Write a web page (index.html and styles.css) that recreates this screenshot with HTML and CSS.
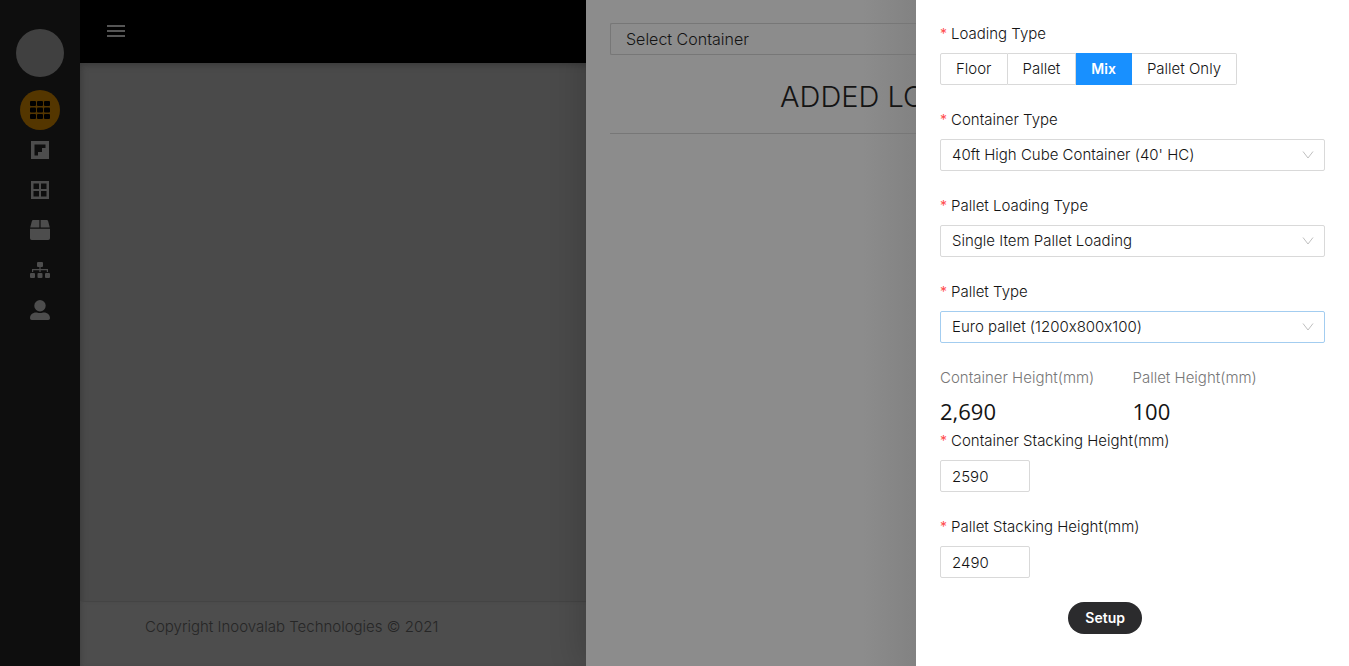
FILE: index.html
```html
<!DOCTYPE html>
<html lang="en">

<head>
    <meta charset="UTF-8">
    <meta name="viewport" content="width=device-width, initial-scale=1.0">
    <title>Inoovalab</title>
    <link rel="stylesheet" href="styles.css">
</head>

<body>
    <div class="app">
        <nav class="sidebar">
            <div class="avatar"></div>
            <a href="#" class="nav-item active" aria-label="Containers">
                <svg width="20" height="18" viewBox="0 0 20 18">
                    <rect x="0" y="0" width="6" height="5" rx="1"/><rect x="7" y="0" width="6" height="5" rx="1"/><rect x="14" y="0" width="6" height="5" rx="1"/>
                    <rect x="0" y="6.5" width="6" height="5" rx="1"/><rect x="7" y="6.5" width="6" height="5" rx="1"/><rect x="14" y="6.5" width="6" height="5" rx="1"/>
                    <rect x="0" y="13" width="6" height="5" rx="1"/><rect x="7" y="13" width="6" height="5" rx="1"/><rect x="14" y="13" width="6" height="5" rx="1"/>
                </svg>
            </a>
            <a href="#" class="nav-item" aria-label="Floor">
                <svg width="18" height="18" viewBox="0 0 18 18">
                    <path fill-rule="evenodd" d="M0 0h18v18H0zM3.500 3.500v11H7V11h4V7h3.500V3.500z"/>
                </svg>
            </a>
            <a href="#" class="nav-item" aria-label="Pallets">
                <svg width="18" height="18" viewBox="0 0 18 18">
                    <path fill-rule="evenodd" d="M0 0h18v18H0zM2.500 2.500v5.500h5.500v-5.500zM10 2.500v5.500h5.500v-5.500zM2.500 10v5.500h5.500v-5.500zM10 10v5.500h5.500v-5.500z"/>
                </svg>
            </a>
            <a href="#" class="nav-item" aria-label="Items">
                <svg width="20" height="20" viewBox="0 0 20 20">
                    <path d="M3.200 0H9.400V7.500H.200L1.900 1Q2.200 0 3.200 0zM10.600 0h6.200q1 0 1.300 1l1.700 6.500h-9.200zM0 8.700h20V18.200q0 1.800-1.800 1.800H1.800Q0 20 0 18.200z"/>
                </svg>
            </a>
            <a href="#" class="nav-item" aria-label="Groups">
                <svg width="20" height="16" viewBox="0 0 20 16">
                    <rect x="7" y="0" width="6" height="5" rx="1"/>
                    <path d="M9.400 5h1.200v2h7.400v3h-1.200V8.200h-6.200V10h-1.200V8.200H3.200V10H2V7h7.400z"/>
                    <rect x="0" y="11" width="5" height="5" rx="1"/><rect x="7.500" y="11" width="5" height="5" rx="1"/><rect x="15" y="11" width="5" height="5" rx="1"/>
                </svg>
            </a>
            <a href="#" class="nav-item" aria-label="Account">
                <svg width="20" height="20" viewBox="0 0 20 20">
                    <circle cx="10" cy="5.700" r="5.700"/>
                    <path d="M0 18.200C0 14.800 2.600 12.500 6 12.500c1.400 0 2 .600 4 .600s2.600-.600 4-.600c3.400 0 6 2.300 6 5.700q0 1.800-1.800 1.800H1.800Q0 20 0 18.200z"/>
                </svg>
            </a>
        </nav>

        <div class="main">
            <header class="topbar">
                <button class="menu-btn" aria-label="Menu">
                    <svg width="18" height="12" viewBox="0 0 18 12"><path d="M0 0h18v2H0zM0 5h18v2H0zM0 10h18v2H0z"/></svg>
                </button>
            </header>
            <main class="content"></main>
            <footer class="footer">Copyright Inoovalab Technologies © 2021</footer>
        </div>

        <section class="loads">
            <button class="select-container">Select Container</button>
            <h1>ADDED LO</h1>
        </section>

        <form class="drawer">
            <fieldset class="field">
                <legend class="label">Loading Type</legend>
                <div class="radio-group">
                    <label><input type="radio" name="loading" value="floor"><span>Floor</span></label>
                    <label><input type="radio" name="loading" value="pallet"><span>Pallet</span></label>
                    <label><input type="radio" name="loading" value="mix" checked><span>Mix</span></label>
                    <label><input type="radio" name="loading" value="pallet-only"><span>Pallet Only</span></label>
                </div>
            </fieldset>

            <div class="field">
                <label class="label" for="container-type">Container Type</label>
                <div class="select">
                    <select id="container-type">
                        <option>40ft High Cube Container (40' HC)</option>
                    </select>
                    <svg width="12" height="8" viewBox="0 0 12 8"><path d="M1 .500l5 6.500 5-6.500"/></svg>
                </div>
            </div>

            <div class="field">
                <label class="label" for="pallet-loading">Pallet Loading Type</label>
                <div class="select">
                    <select id="pallet-loading">
                        <option>Single Item Pallet Loading</option>
                    </select>
                    <svg width="12" height="8" viewBox="0 0 12 8"><path d="M1 .500l5 6.500 5-6.500"/></svg>
                </div>
            </div>

            <div class="field">
                <label class="label" for="pallet-type">Pallet Type</label>
                <div class="select focused">
                    <select id="pallet-type">
                        <option>Euro pallet (1200x800x100)</option>
                    </select>
                    <svg width="12" height="8" viewBox="0 0 12 8"><path d="M1 .500l5 6.500 5-6.500"/></svg>
                </div>
            </div>

            <div class="stats">
                <div>
                    <div class="stat-title">Container Height(mm)</div>
                    <div class="stat-value">2,690</div>
                </div>
                <div>
                    <div class="stat-title">Pallet Height(mm)</div>
                    <div class="stat-value">100</div>
                </div>
            </div>

            <div class="field">
                <label class="label" for="container-stack">Container Stacking Height(mm)</label>
                <input class="number" id="container-stack" type="text" value="2590">
            </div>

            <div class="field">
                <label class="label" for="pallet-stack">Pallet Stacking Height(mm)</label>
                <input class="number" id="pallet-stack" type="text" value="2490">
            </div>

            <div class="actions">
                <button type="button" class="setup">Setup</button>
            </div>
        </form>
    </div>
</body>

</html>
```
FILE: styles.css
```css
* {
    box-sizing: border-box;
}

body {
    margin: 0;
    font-family: Inter, "Open Sans", sans-serif;
    font-size: 15px;
    font-weight: 300;
    font-variant-ligatures: no-contextual;
    line-height: 22px;
    color: #141414;
}

button, input, select {
    font: inherit;
    font-variant-ligatures: inherit;
    color: inherit;
}

.app {
    display: flex;
    min-height: 100vh;
}

/* sidebar */
.sidebar {
    flex: 0 0 80px;
    display: flex;
    flex-direction: column;
    align-items: center;
    padding-top: 29px;
    background: #0e0e0e;
}

.avatar {
    width: 48px;
    height: 48px;
    margin-bottom: 13px;
    border-radius: 50%;
    background: #404040;
}

.nav-item {
    display: flex;
    align-items: center;
    justify-content: center;
    width: 40px;
    height: 40px;
    border-radius: 50%;
    fill: #4d4d4d;
}

.nav-item.active {
    background: #543600;
    fill: #000;
}

/* page behind the drawers */
.main {
    flex: 1;
    display: flex;
    flex-direction: column;
    min-width: 0;
    background: #4a4a4a;
}

.topbar {
    display: flex;
    align-items: center;
    height: 63px;
    padding: 0 0 2px 27px;
    background: #000;
}

.menu-btn {
    display: flex;
    padding: 0;
    border: 0;
    background: none;
    fill: #555;
}

.content {
    flex: 1;
    box-shadow: inset 4px 5px 6px -3px #393939;
}

.footer {
    height: 65px;
    padding: 14px 65px;
    border-top: 1px solid #444;
    background: #4d4d4d;
    box-shadow: inset 4px 0 5px -3px #404040;
    color: #262626;
    white-space: nowrap;
}

/* first drawer */
.loads {
    flex: 0 0 330px;
    padding: 23px 0 0 24px;
    overflow: hidden;
    background: linear-gradient(to right, #8c8c8c 84%, #828282);
    box-shadow: -6px 0 30px rgba(0, 0, 0, 0.16);
    color: #141414;
}

.select-container {
    display: block;
    width: 100%;
    height: 32px;
    padding: 0 15px;
    border: 1px solid #777;
    border-right: 0;
    border-radius: 2px 0 0 2px;
    background: none;
    font-size: 16px;
    text-align: left;
}

.loads h1 {
    margin: 0;
    padding: 22px 0 16px 170px;
    border-bottom: 1px solid #777;
    font-size: 29px;
    font-weight: 300;
    line-height: 40px;
    white-space: nowrap;
}

/* setup drawer */
.drawer {
    flex: 0 0 433px;
    padding: 23px 24px;
    background: #fff;
}

.field {
    min-width: 0;
    margin: 0 0 24px;
    padding: 0;
    border: 0;
}

.label {
    display: block;
    padding: 0 0 8px;
}

.label::before {
    content: "*";
    display: inline-block;
    width: 11px;
    color: #ff4d4f;
    font-size: 14px;
    font-weight: 400;
}

.radio-group {
    display: flex;
}

.radio-group input {
    position: absolute;
    opacity: 0;
}

.radio-group span {
    display: block;
    height: 32px;
    padding: 4px 15px;
    border: 1px solid #d9d9d9;
    border-left: 0;
}

.radio-group label:first-child span {
    border-left: 1px solid #d9d9d9;
    border-radius: 2px 0 0 2px;
}

.radio-group label:last-child span {
    border-radius: 0 2px 2px 0;
}

.radio-group input:checked + span {
    border-color: #1890ff;
    background: #1890ff;
    color: #fff;
    font-size: 14px;
    font-weight: 600;
}

.select {
    display: grid;
    align-items: center;
}

.select select,
.select svg {
    grid-area: 1 / 1;
}

.select select {
    width: 100%;
    height: 32px;
    padding: 0 30px 0 11px;
    border: 1px solid #d9d9d9;
    border-radius: 2px;
    background: #fff;
    appearance: none;
}

.select svg {
    justify-self: end;
    margin-right: 11px;
    fill: none;
    stroke: #bfbfbf;
    pointer-events: none;
}

.select.focused select {
    border-color: #a3cdf0;
}

.stats {
    display: grid;
    grid-template-columns: 1fr 1fr;
}

.stat-title {
    margin-bottom: 4px;
    color: #777;
}

.stat-value {
    font-family: "Open Sans", sans-serif;
    font-size: 22px;
    font-weight: 400;
    line-height: 37px;
}

.number {
    display: block;
    width: 90px;
    height: 32px;
    padding: 4px 11px;
    border: 1px solid #d9d9d9;
    border-radius: 2px;
}

.actions {
    display: grid;
    grid-template-columns: repeat(3, 1fr);
}

.setup {
    grid-column: 2;
    justify-self: start;
    height: 32px;
    padding: 0 17px;
    border: 0;
    border-radius: 16px;
    background: #2b2b2d;
    color: #fff;
    font-size: 14px;
    font-weight: 600;
}
```
